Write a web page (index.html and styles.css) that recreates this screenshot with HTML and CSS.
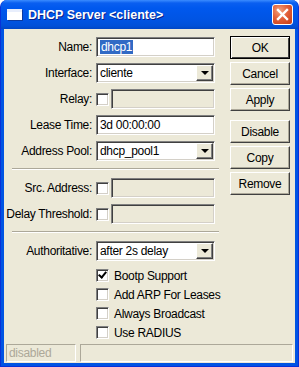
FILE: index.html
```html
<!DOCTYPE html>
<html lang="en">
<head>
  <meta charset="UTF-8">
  <title>DHCP Server &lt;cliente&gt;</title>
  <link rel="stylesheet" href="styles.css">
</head>
<body>
  <div class="window">
    <div class="titlebar">
      <span class="app-icon"></span>
      <span class="title">DHCP Server &lt;cliente&gt;</span>
      <span class="close">
        <svg width="13" height="13" viewBox="0 0 13 13"><path d="M2 2 L11 11 M11 2 L2 11" stroke="#fff" stroke-width="2.4" stroke-linecap="square"/></svg>
      </span>
    </div>

    <div class="client">
      <div class="main">
        <div class="form">
          <div class="row">
            <label>Name:</label>
            <div class="field text"><span class="sel">dhcp1</span></div>
          </div>
          <div class="row">
            <label>Interface:</label>
            <div class="field text combo">cliente<span class="drop"></span></div>
          </div>
          <div class="row">
            <label>Relay:</label>
            <span class="check"></span>
            <div class="field off short"></div>
          </div>
          <div class="row">
            <label>Lease Time:</label>
            <div class="field text">3d 00:00:00</div>
          </div>
          <div class="row">
            <label>Address Pool:</label>
            <div class="field text combo">dhcp_pool1<span class="drop"></span></div>
          </div>

          <div class="sep"></div>

          <div class="row">
            <label>Src. Address:</label>
            <span class="check"></span>
            <div class="field off short"></div>
          </div>
          <div class="row">
            <label>Delay Threshold:</label>
            <span class="check"></span>
            <div class="field off short"></div>
          </div>

          <div class="sep"></div>

          <div class="row">
            <label>Authoritative:</label>
            <div class="field text combo">after 2s delay<span class="drop"></span></div>
          </div>

          <div class="opts">
            <div class="opt"><span class="check on"></span>Bootp Support</div>
            <div class="opt"><span class="check"></span>Add ARP For Leases</div>
            <div class="opt"><span class="check"></span>Always Broadcast</div>
            <div class="opt"><span class="check"></span>Use RADIUS</div>
          </div>
        </div>

        <div class="buttons">
          <button class="btn default">OK</button>
          <button class="btn">Cancel</button>
          <button class="btn">Apply</button>
          <button class="btn gap">Disable</button>
          <button class="btn">Copy</button>
          <button class="btn">Remove</button>
        </div>
      </div>

      <div class="status">
        <div class="cell first">disabled</div>
        <div class="cell rest"></div>
      </div>
    </div>
  </div>
</body>
</html>
```

FILE: styles.css
```css
body {
  margin: 0;
  background: #fff;
  font-family: "Liberation Sans", Arial, sans-serif;
  font-size: 12px;
  letter-spacing: -0.3px;
}

.window {
  width: 299px;
  height: 367px;
  box-sizing: border-box;
  display: flex;
  flex-direction: column;
  background: #0054e3;
  border: 1px solid #0831d9;
  border-top: none;
  border-radius: 7px 7px 0 0;
  overflow: hidden;
}

.titlebar {
  height: 29px;
  flex: none;
  display: flex;
  align-items: center;
  padding: 0 5px 0 6px;
  background: linear-gradient(#3b8cff 0, #0a5ff0 3px, #0058ee 8px, #0054e3 20px, #0050d8 26px, #0046c4 29px);
  color: #fff;
}

.app-icon {
  width: 15px;
  height: 11px;
  background: #fff;
  border-top: 3px solid #e8eefc;
  box-sizing: border-box;
  margin-right: 6px;
  box-shadow: 1px 1px 0 #0a3aa0;
}

.title {
  flex: 1;
  font-weight: bold;
  font-size: 12.5px;
  letter-spacing: 0;
  text-shadow: 1px 1px 0 #0a1f8a;
}

.close {
  width: 21px;
  height: 21px;
  box-sizing: border-box;
  border: 1px solid #fff;
  border-radius: 3px;
  background: radial-gradient(circle at 35% 30%, #f3a27e 0, #e2603a 45%, #c63a14 100%);
  display: flex;
  align-items: center;
  justify-content: center;
}

.client {
  flex: 1;
  margin: 0 3px 3px;
  background: #ece9d8;
  display: flex;
  flex-direction: column;
}

.main {
  flex: 1;
  display: flex;
  padding-top: 5px;
}

.form {
  width: 215px;
  flex: none;
}

.row {
  height: 26px;
  display: flex;
  align-items: center;
}

.row label {
  width: 88px;
  text-align: right;
  padding-right: 4px;
  white-space: nowrap;
  color: #000;
}

.field {
  height: 20px;
  box-sizing: border-box;
  width: 119px;
  border-top: 1px solid #808080;
  border-left: 1px solid #808080;
  border-right: 1px solid #fff;
  border-bottom: 1px solid #fff;
  box-shadow: inset 1px 1px 0 #404040, inset -1px -1px 0 #d4d0c8;
  padding: 2px 3px;
  line-height: 15px;
  position: relative;
}

.text {
  background: #fff;
}

.off {
  background: #ece9d8;
}

.short {
  width: 104px;
  margin-left: 2px;
}

.sel {
  background: #316ac5;
  color: #fff;
  padding: 0 1px;
}

.drop {
  position: absolute;
  right: 1px;
  top: 1px;
  width: 17px;
  height: 16px;
  box-sizing: border-box;
  background: #ece9d8;
  border-top: 1px solid #fff;
  border-left: 1px solid #fff;
  border-right: 1px solid #404040;
  border-bottom: 1px solid #404040;
  box-shadow: inset -1px -1px 0 #808080;
}

.drop::after {
  content: "";
  position: absolute;
  left: 4px;
  top: 5px;
  border-left: 4px solid transparent;
  border-right: 4px solid transparent;
  border-top: 4px solid #000;
}

.check {
  width: 13px;
  height: 13px;
  box-sizing: border-box;
  flex: none;
  background: #fff;
  border-top: 1px solid #808080;
  border-left: 1px solid #808080;
  border-right: 1px solid #fff;
  border-bottom: 1px solid #fff;
  box-shadow: inset 1px 1px 0 #404040, inset -1px -1px 0 #d4d0c8;
  position: relative;
}

.check.on::after {
  content: "";
  position: absolute;
  left: 3px;
  top: 0px;
  width: 3px;
  height: 6px;
  border-right: 2px solid #000;
  border-bottom: 2px solid #000;
  transform: rotate(40deg);
}

.sep {
  margin: 4px 0 5px 8px;
  height: 0;
  border-top: 1px solid #aca899;
  border-bottom: 1px solid #fff;
}

.opts {
  padding-left: 92px;
  padding-top: 2px;
  white-space: nowrap;
}

.opt {
  height: 19px;
  display: flex;
  align-items: center;
  gap: 5px;
}

.buttons {
  display: flex;
  flex-direction: column;
  gap: 3px;
  margin-left: 11px;
  padding-top: 2px;
}

.btn {
  width: 60px;
  height: 23px;
  box-sizing: border-box;
  font-family: "Liberation Sans", Arial, sans-serif;
  font-size: 12px;
  letter-spacing: -0.3px;
  color: #000;
  background: #ece9d8;
  border-top: 1px solid #fff;
  border-left: 1px solid #fff;
  border-right: 1px solid #404040;
  border-bottom: 1px solid #404040;
  box-shadow: inset -1px -1px 0 #aca899;
  padding: 0;
}

.btn.default {
  border: 1px solid #000;
  box-shadow: inset 1px 1px 0 #fff, inset -1px -1px 0 #404040;
}

.btn.gap {
  margin-top: 6px;
}

.status {
  height: 18px;
  display: flex;
  gap: 4px;
  padding: 0 2px 1px 2px;
}

.cell {
  box-sizing: border-box;
  height: 18px;
  border-top: 1px solid #aca899;
  border-left: 1px solid #aca899;
  border-right: 1px solid #fff;
  border-bottom: 1px solid #fff;
  color: #aca899;
  padding: 1px 2px;
  line-height: 14px;
}

.first {
  width: 70px;
}

.rest {
  flex: 1;
}
```
